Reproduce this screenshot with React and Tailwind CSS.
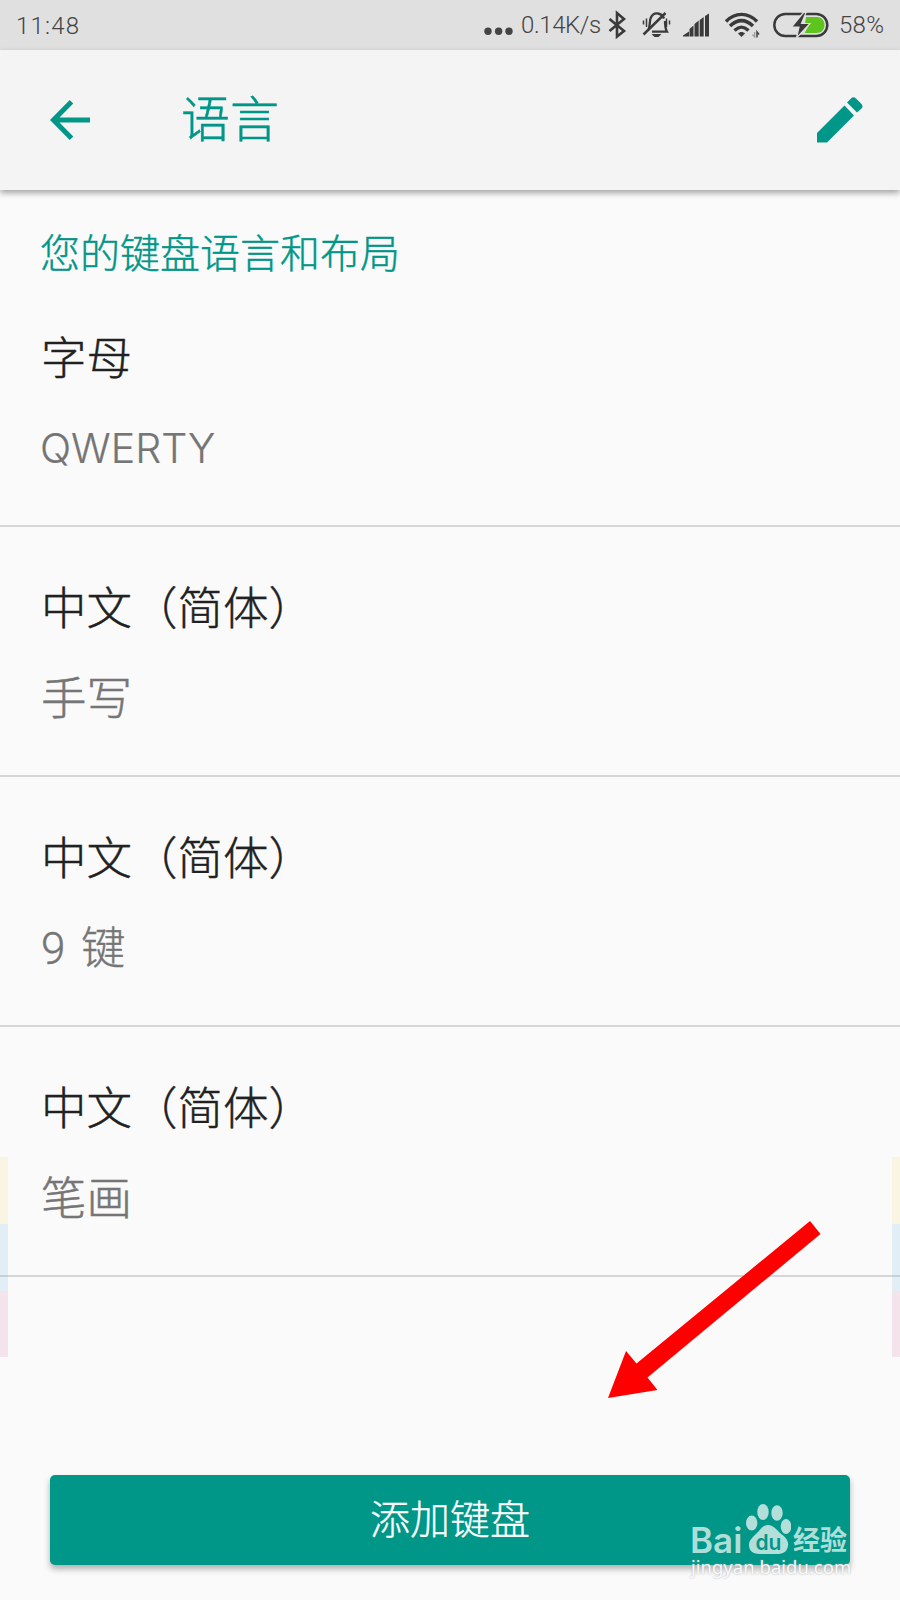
import React from "react";

const keyboards = [
  { name: "字母", layout: "QWERTY", latin: true },
  { name: "中文（简体）", layout: "手写" },
  { name: "中文（简体）", layout: "9 键", mixed: true },
  { name: "中文（简体）", layout: "笔画" },
];

function StatusIcons() {
  return (
    <svg className="h-[50px] w-[228px] shrink-0" viewBox="604 0 228 50" fill="none">
      <path d="M609.500 19L624 31L617 36.500V13L624 19L609.500 31" stroke="#3a3a3a" strokeWidth="2.600" />
      <g stroke="#3a3a3a">
        <path d="M648.5 29.500C650 27 649.500 22 650.500 18.500C652 14.500 655 13 658 13.500C661 14 663 16 664 18.500M665 21C665 26 665.500 29 667 31.700H652" strokeWidth="2.300" />
        <path d="M643.500 34.500L665.500 13" strokeWidth="2.500" />
        <path d="M643.5 20.5V24.5M646.5 18.5V27M666.500 18.500V27M669.500 20.500V24.500" strokeWidth="1.500" />
      </g>
      <path d="M651.500 34H661.500L658.500 37H654.500Z" fill="#3a3a3a" />
      <g fill="#3a3a3a">
        <path d="M683 36.500V35.500L689 31.500V36.500Z" />
        <path d="M689.500 36.500V29L693.500 25.500V36.500Z" />
        <path d="M694.500 36.500V24L698.700 20.500V36.500Z" />
        <path d="M699.700 36.500V20L703.700 17V36.500Z" />
        <path d="M705 36.500V16L709 13.500V36.500Z" />
      </g>
      <g stroke="#3a3a3a" strokeWidth="3.400">
        <path d="M726 21.500C735 12 748 12 757 21.500" />
        <path d="M730 26C737.500 19 745.500 19 753 26" />
        <path d="M734.500 30.500C739.500 26 743.500 26 748.500 30.500" />
      </g>
      <path d="M738 33.500C740 31.500 743 31.500 745 33.500L741.500 37Z" fill="#3a3a3a" />
      <path d="M754.700 32V37L752.500 34.500" stroke="#999" strokeWidth="1.200" />
      <path d="M757 37.500V32L759 34.500" stroke="#444" strokeWidth="1.500" />
      <rect x="774.300" y="14" width="53" height="22" rx="11" stroke="#3a3a3a" strokeWidth="2.500" />
      <path d="M806 17H816.500C821.500 17 824.500 20.500 824.500 25C824.500 29.500 821.500 33 816.500 33H804.500L810 23.500H805Z" fill="#5dc51e" />
      <path d="M803.500 12.500L791.500 27H799L796.500 38L810 23.500H801.500L806 12.500Z" fill="#3a3a3a" stroke="#e0e0e0" strokeWidth="1.200" />
    </svg>
  );
}

function StatusBar() {
  return (
    <div className="flex h-[50px] items-center bg-[#e0e0e0] pr-[15px] pl-4 font-['Roboto',sans-serif] text-[24px] font-light text-[#444]">
      <span className="pt-px tracking-[1.2px]">11:48</span>
      <div className="ml-auto flex items-center">
        <svg className="mr-[7px] h-[50px] w-[30px]" viewBox="484 0 30 50" fill="#444">
          <circle cx="488" cy="31.3" r="3.7" />
          <circle cx="498.6" cy="31.3" r="3.7" />
          <circle cx="509" cy="31.3" r="3.7" />
        </svg>
        <span className="w-[83px] tracking-[-0.4px] whitespace-nowrap">0.14K/s</span>
        <StatusIcons />
        <span className="w-[53px] pl-[7px] text-[24px] tracking-[0.3px]">58%</span>
      </div>
    </div>
  );
}

function Header() {
  return (
    <header className="z-10 flex h-[140px] items-center bg-[#f4f4f4] px-[50px] pr-[37px] text-[#009688] shadow-[0_3px_6px_rgba(0,0,0,0.35)]">
      <svg className="h-10 w-10" viewBox="0 0 40 40" fill="none" stroke="currentColor" strokeWidth="5">
        <path d="M40 20H4M21.500 1.800L3.500 20L21.500 38.200" />
      </svg>
      <h1 className="ml-[91px] -mt-[9px] text-[49px] leading-none font-light [-webkit-text-stroke:0.5px]">语言</h1>
      <svg className="ml-auto h-[46px] w-[46px]" viewBox="0 0 46 46" fill="currentColor">
        <path d="M0 36V45.500H10L37 18.500L27.500 8.500Z" />
        <path d="M30 5.500L34 1.500Q36.500 -1 39 1.500L44.500 7Q46.500 9.500 44.500 11.500L40 15.500Z" />
      </svg>
    </header>
  );
}

function Watermark() {
  return (
    <div className="absolute top-[1500px] left-[690px] w-[164px] text-white/70">
      <div className="flex h-[54px] items-end">
        <span className="w-[55px] font-['Inter',sans-serif] text-[35px] leading-[28px] font-semibold">Bai</span>
        <svg className="h-[54px] w-[46px] shrink-0" viewBox="745 1500 46 54">
          <g fill="#b3dfdb">
            <ellipse cx="751.7" cy="1523" rx="5.7" ry="7.5" />
            <ellipse cx="763" cy="1512" rx="5.7" ry="8" />
            <ellipse cx="777" cy="1513" rx="5.7" ry="7.7" />
            <ellipse cx="786" cy="1526.5" rx="5.3" ry="7.5" />
            <path d="M768 1525C773 1525 776 1529 780 1533C785 1537 789 1540 788 1546C787 1552 783 1554 777 1554H760C753 1554 749 1551 749 1545C749 1540 753 1537 757 1533C761 1529 763 1525 768 1525Z" />
          </g>
          <text x="768.5" y="1550" textAnchor="middle" fill="#009688" fontFamily="Inter, sans-serif" fontSize="21" fontWeight="600">du</text>
        </svg>
        <span className="ml-[2px] text-[27px] leading-[31px] font-bold whitespace-nowrap">经验</span>
      </div>
      <div className="pl-px font-['Noto_Sans',sans-serif] text-[18.500px] leading-[25px] whitespace-nowrap text-white/90 [text-shadow:0_0_2px_#aaa]">
        jingyan.baidu.com
      </div>
    </div>
  );
}

function EdgeStripes({ side }) {
  return (
    <div className={"absolute top-[1157px] w-2 " + side}>
      <div className="h-[67px] bg-[#f5df80]/20" />
      <div className="h-[67px] bg-[#7fbfe8]/20" />
      <div className="h-[66px] bg-[#dd88b0]/20" />
    </div>
  );
}

function layoutClass(k) {
  if (k.latin) return "mt-[33px] -ml-px font-['Inter',sans-serif] text-[41px] leading-[60px] font-light [-webkit-text-stroke:0.2px]";
  if (k.mixed) return "mt-[34px] font-['Roboto','Noto_Sans_CJK_SC',sans-serif] text-[44px] leading-[60px] font-light [word-spacing:5px] [-webkit-text-stroke:0.4px]";
  return "mt-[30px] text-[45.500px] leading-[60px] font-light [-webkit-text-stroke:0.5px]";
}

export default function App() {
  return (
    <div className="relative flex h-[1600px] w-[900px] flex-col overflow-hidden bg-[#fafafa] font-['Noto_Sans_CJK_SC',sans-serif]">
      <StatusBar />
      <Header />
      <main className="flex flex-1 flex-col">
        <h2 className="mt-[37px] mb-[2px] pl-10 text-[40px] leading-[48px] font-light text-[#009688] [-webkit-text-stroke:0.4px]">您的键盘语言和布局</h2>
        <ul>
          {keyboards.map((k, i) => (
            <li key={i} className="flex h-[250px] flex-col border-b-2 border-[#d6d6d6] pt-[48px] pl-[41px]">
              <span className="text-[45.500px] leading-[60px] font-light text-[#212121] [-webkit-text-stroke:0.4px]">{k.name}</span>
              <span className={"text-[#757575] " + layoutClass(k)}>{k.layout}</span>
            </li>
          ))}
        </ul>
        <button className="mx-[50px] mt-auto mb-[35px] h-[90px] rounded-[5px] bg-[#009688] pb-1.5 text-[40px] leading-none font-light text-white shadow-[0_4px_6px_rgba(0,0,0,0.3)] [-webkit-text-stroke:0.3px]">
          添加键盘
        </button>
      </main>
      <EdgeStripes side="left-0" />
      <EdgeStripes side="right-0" />
      <svg className="absolute top-[1215px] left-[600px] h-[190px] w-[230px]" viewBox="600 1215 230 190">
        <path d="M810 1221L820.500 1234L647.500 1377.500L657.500 1390L608 1398L626 1351L636.500 1363.500Z" fill="#ff0000" />
      </svg>
      <Watermark />
    </div>
  );
}
